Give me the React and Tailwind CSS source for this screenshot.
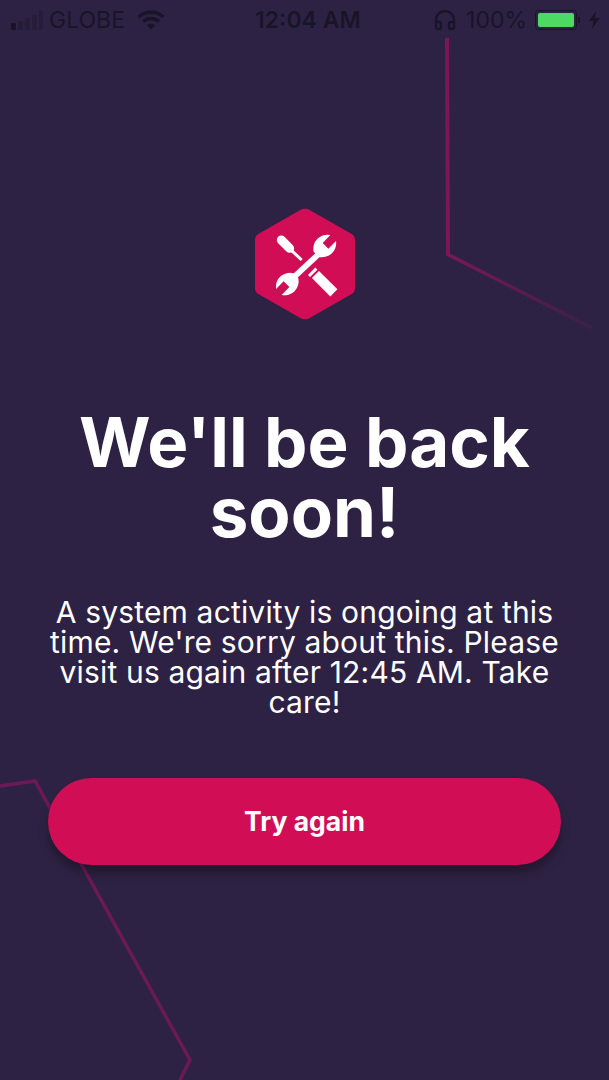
import { Headphones } from "lucide-react";

const statusText = "text-[#181528] text-[23px] leading-none";

function Signal() {
  return (
    <svg width="32" height="24" viewBox="0 0 32 24" className="text-[#181528]">
      <rect x="0" y="15" width="5" height="7" rx="1" fill="currentColor" />
      <rect x="7" y="13" width="5" height="9" rx="1" fill="currentColor" opacity="0.4" />
      <rect x="14" y="10" width="5" height="12" rx="1" fill="currentColor" opacity="0.35" />
      <rect x="21" y="7" width="5" height="15" rx="1" fill="currentColor" opacity="0.3" />
      <rect x="28" y="2" width="4" height="20" rx="1" fill="currentColor" opacity="0.3" />
    </svg>
  );
}

function Wifi() {
  return (
    <svg width="28" height="20" viewBox="0 0 28 20" fill="none" stroke="#181528" strokeWidth="3.4">
      <path d="M1.5 7 C8.5 0.6 19.5 0.6 26.5 7" />
      <path d="M6 11.5 C10.5 7.5 17.5 7.5 22 11.5" />
      <path d="M14 19.5 L9.5 15.3 C12 13.2 16 13.2 18.5 15.3 Z" fill="#181528" stroke="none" />
    </svg>
  );
}

function Battery() {
  return (
    <div className="flex items-center gap-[1px]">
      <div className="w-[42px] h-[20px] rounded-[4px] border border-[#181528] p-[2px]">
        <div className="w-full h-full rounded-[2px] bg-[#4cd964]" />
      </div>
      <div className="w-[2px] h-[6px] bg-[#181528]" />
    </div>
  );
}

function Bolt() {
  return (
    <svg width="11" height="18" viewBox="0 0 11 18" fill="#181528">
      <path d="M7 0 L0 10 H4.5 L3 18 L11 7 H6 Z" />
    </svg>
  );
}

function StatusBar() {
  return (
    <div className="grid grid-cols-[244px_auto_1fr] items-center self-stretch h-10 pl-[11px] pr-[9px]">
      <div className="flex items-center">
        <Signal />
        <span className={`${statusText} ml-[6px]`}>GLOBE</span>
        <div className="ml-[12px]"><Wifi /></div>
      </div>
      <span className={`${statusText} font-semibold`}>12:04 AM</span>
      <div className="flex items-center justify-end">
        <Headphones size={24} strokeWidth={2.4} className="text-[#181528]" />
        <span className={`${statusText} ml-[9px]`}>100%</span>
        <div className="ml-[8px]"><Battery /></div>
        <div className="ml-[9px]"><Bolt /></div>
      </div>
    </div>
  );
}

const wrenchHead = "M268 105 A42 42 0 0 0 218 155 L232 170 A42 42 0 0 0 285 123 L262 146 L245 129 Z";

function Logo() {
  return (
    <svg width="100" height="112" viewBox="42 24 300 336">
      <path
        d="M178 30 Q192 22 206 30 L332 102 Q342 108 342 120 L342 264 Q342 276 332 282 L206 354 Q192 362 178 354 L52 282 Q42 276 42 264 L42 120 Q42 108 52 102 Z"
        fill="#d10e55"
      />
      {/* screwdriver */}
      <path d="M121 120 L146 145" stroke="#fff" strokeWidth="27" strokeLinecap="round" />
      <path d="M148 148 L182 180" stroke="#fff" strokeWidth="9" />
      <path d="M234 234 L268 268" stroke="#fff" strokeWidth="30" strokeLinecap="square" />
      <path d="M204 228 L226 206" stroke="#fff" strokeWidth="9" />
      {/* wrench */}
      <path d="M232 163 L158 232" stroke="#fff" strokeWidth="17" />
      <path d={wrenchHead} fill="#fff" />
      <path d={wrenchHead} fill="#fff" transform="rotate(180 195 195)" />
    </svg>
  );
}

function Lines() {
  return (
    <svg className="absolute inset-0" width="609" height="1080" fill="none">
      <defs>
        <linearGradient id="fade" gradientUnits="userSpaceOnUse" x1="448" y1="254" x2="592" y2="328">
          <stop offset="0" stopColor="#7c1658" />
          <stop offset="1" stopColor="#7c1658" stopOpacity="0.15" />
        </linearGradient>
      </defs>
      <path d="M447 38 L448 255" stroke="#7c1658" strokeWidth="4" />
      <path d="M447 254 L592 328" stroke="url(#fade)" strokeWidth="3.5" />
      <path d="M0 786 L35 781 L190 1060 L180 1080" stroke="#6b1a55" strokeWidth="3.5" />
    </svg>
  );
}

export default function App() {
  return (
    <div className="relative w-[609px] h-[1080px] overflow-hidden bg-[#2e2244] font-['Inter',sans-serif]">
      <Lines />
      <div className="relative flex flex-col items-center">
        <StatusBar />
        <div className="mt-[168px]"><Logo /></div>
        <h1 className="mt-[87px] w-[520px] text-center text-white font-bold text-[69px] leading-[70px]">
          We'll be back soon!
        </h1>
        <p className="mt-[50px] w-[522px] text-center text-white text-[30px] leading-[30px] tracking-[0.17px]">
          A system activity is ongoing at this time. We're sorry about this. Please visit us again after 12:45 AM. Take care!
        </p>
        <button className="mt-[61px] w-[513px] h-[87px] rounded-[44px] bg-[#d10e55] text-white font-bold text-[26.5px] shadow-[0_8px_10px_rgba(0,0,0,0.3)]">
          Try again
        </button>
      </div>
    </div>
  );
}
